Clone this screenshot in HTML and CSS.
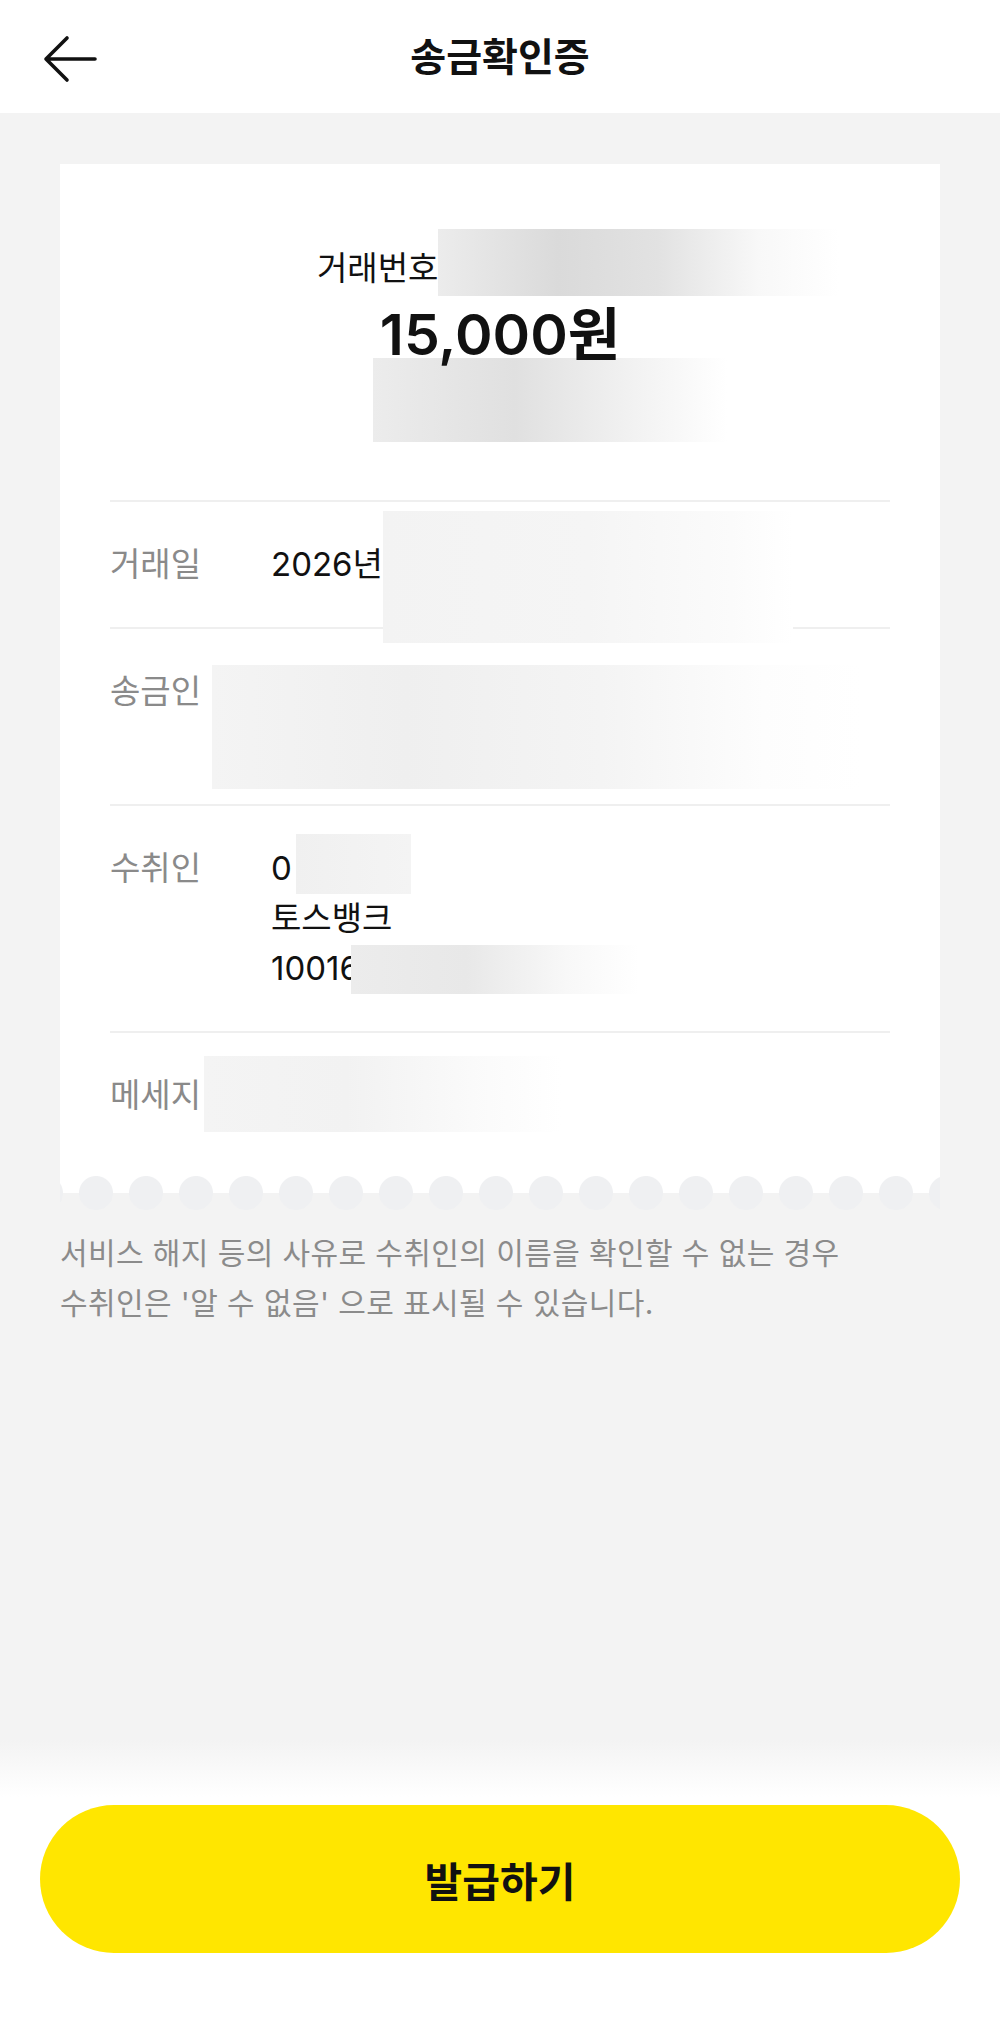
FILE: index.html
```html
<!DOCTYPE html>
<html lang="ko">

<head>
    <meta charset="UTF-8">
    <meta name="viewport" content="width=device-width, initial-scale=1.0">
    <title>송금확인증</title>
    <link rel="stylesheet" href="styles.css">
</head>

<body>
    <div class="topbar">
        <a class="back" href="#">
            <svg width="56" height="48" viewBox="0 0 56 48">
                <path d="M24 3 L3 24 L24 45 M3 24 L52 24" fill="none" stroke="#111" stroke-width="3.6"
                    stroke-linecap="round" stroke-linejoin="round" />
            </svg>
        </a>
        <div class="title">송금확인증</div>
    </div>

    <div class="main">
        <div class="receipt">
            <div class="receipt_body">
                <div class="summary">
                    <div class="trx_line">거래번호<span class="blur blur_trx"></span></div>
                    <div class="amount">15,000원</div>
                    <div class="blur blur_sub"></div>
                </div>

                <div class="row">
                    <div class="label">거래일</div>
                    <div class="value">2026년<span class="blur blur_date"></span></div>
                </div>
                <div class="row">
                    <div class="label">송금인</div>
                    <div class="value">
                        <div class="blur blur_sender"></div>
                    </div>
                </div>
                <div class="row">
                    <div class="label">수취인</div>
                    <div class="value">
                        0<span class="blur blur_name"></span><br>
                        토스뱅크<br>
                        10016<span class="blur blur_acc"></span>
                    </div>
                </div>
                <div class="row">
                    <div class="label">메세지</div>
                    <div class="value">
                        <div class="blur blur_msg"></div>
                    </div>
                </div>
            </div>
            <div class="receipt_edge"></div>
        </div>

        <p class="notice">서비스 해지 등의 사유로 수취인의 이름을 확인할 수 없는 경우<br>수취인은 '알 수 없음' 으로 표시될 수 있습니다.</p>
    </div>

    <div class="bottom">
        <button class="issue_btn">발급하기</button>
    </div>
</body>

</html>
```

FILE: styles.css
```css
html,
body {
    margin: 0;
    padding: 0;
}

body {
    display: flex;
    flex-direction: column;
    min-height: 100vh;
    background-color: #f3f3f3;
    color: #111111;
    font-family: Inter, "Noto Sans CJK KR", sans-serif;
}

.topbar {
    display: flex;
    align-items: center;
    justify-content: center;
    height: 113px;
    background-color: #ffffff;
    position: relative;
}

.back {
    position: absolute;
    left: 43px;
    top: 35px;
    display: block;
    width: 56px;
    height: 48px;
}

.title {
    font-size: 39px;
    font-weight: 600;
    line-height: 113px;
}

.main {
    flex: 1;
    padding: 51px 60px 0 60px;
}

.receipt_body {
    background-color: #ffffff;
    padding: 0 50px 18px 50px;
}

.receipt_edge {
    height: 34px;
    background:
        radial-gradient(circle at 25px 17px, #eff0f2 16.5px, rgba(239, 240, 242, 0) 17.5px) 11px 0 / 50px 34px repeat-x,
        linear-gradient(#ffffff 17px, rgba(255, 255, 255, 0) 17px);
}

.summary {
    padding: 79px 0 58px 0;
}

.trx_line {
    font-size: 33px;
    line-height: 50px;
    height: 50px;
    padding-left: 207px;
}

.amount {
    margin-top: 9px;
    font-size: 57px;
    font-weight: 600;
    line-height: 66px;
    text-align: center;
}

.row {
    display: flex;
    border-top: 2px solid #efefef;
    padding: 37px 0 38px 0;
    font-size: 33px;
    line-height: 50px;
}

.label {
    width: 161px;
    flex-shrink: 0;
    color: #8a8a8a;
}

.value {
    flex: 1;
}

.blur {
    display: inline-block;
    vertical-align: top;
}

.blur_trx {
    width: 401px;
    height: 67px;
    margin: -14px 0 -3px 0;
    background: linear-gradient(90deg, #ececec 0%, #dadada 30%, #e2e2e2 55%, #f8f8f8 80%, #ffffff 100%);
}

.blur_sub {
    display: block;
    width: 354px;
    height: 84px;
    margin: -10px 0 0 263px;
    background: linear-gradient(90deg, #ececec 0%, #e0e0e0 40%, #f0f0f0 70%, #ffffff 100%);
}

.blur_date {
    width: 410px;
    height: 132px;
    margin: -28px 0 -54px 0;
    background: linear-gradient(90deg, #f3f3f3 0%, #f5f5f5 50%, #fbfbfb 85%, #ffffff 100%);
}

.blur_sender {
    display: block;
    width: 649px;
    height: 124px;
    margin: -1px 0 -23px -59px;
    background: linear-gradient(90deg, #f4f4f4 0%, #efefef 30%, #f4f4f4 60%, #fdfdfd 85%, #ffffff 100%);
}

.blur_name {
    width: 115px;
    height: 60px;
    margin: -9px 0 -1px 4px;
    background: linear-gradient(90deg, #f0f0f0, #f4f4f4);
}

.blur_acc {
    width: 288px;
    height: 49px;
    margin: 2px 0 -1px -9px;
    background: linear-gradient(90deg, #ececec 0%, #e8e8e8 40%, #f8f8f8 75%, #ffffff 100%);
}

.blur_msg {
    display: block;
    width: 357px;
    height: 76px;
    margin: -14px 0 -12px -67px;
    background: linear-gradient(90deg, #f4f4f4 0%, #f2f2f2 40%, #fafafa 75%, #ffffff 100%);
}

.notice {
    margin: 18px 0 0 0;
    font-size: 30px;
    line-height: 50px;
    color: #8b8b8b;
    letter-spacing: 0.4px;
}

.bottom {
    padding: 65px 40px 85px 40px;
    background: linear-gradient(#f3f3f3 0px, #ffffff 57px);
}

.issue_btn {
    display: block;
    width: 100%;
    height: 148px;
    border: none;
    border-radius: 74px;
    background-color: #ffe600;
    color: #111111;
    font-family: Inter, "Noto Sans CJK KR", sans-serif;
    font-size: 41px;
    font-weight: 600;
}
```
